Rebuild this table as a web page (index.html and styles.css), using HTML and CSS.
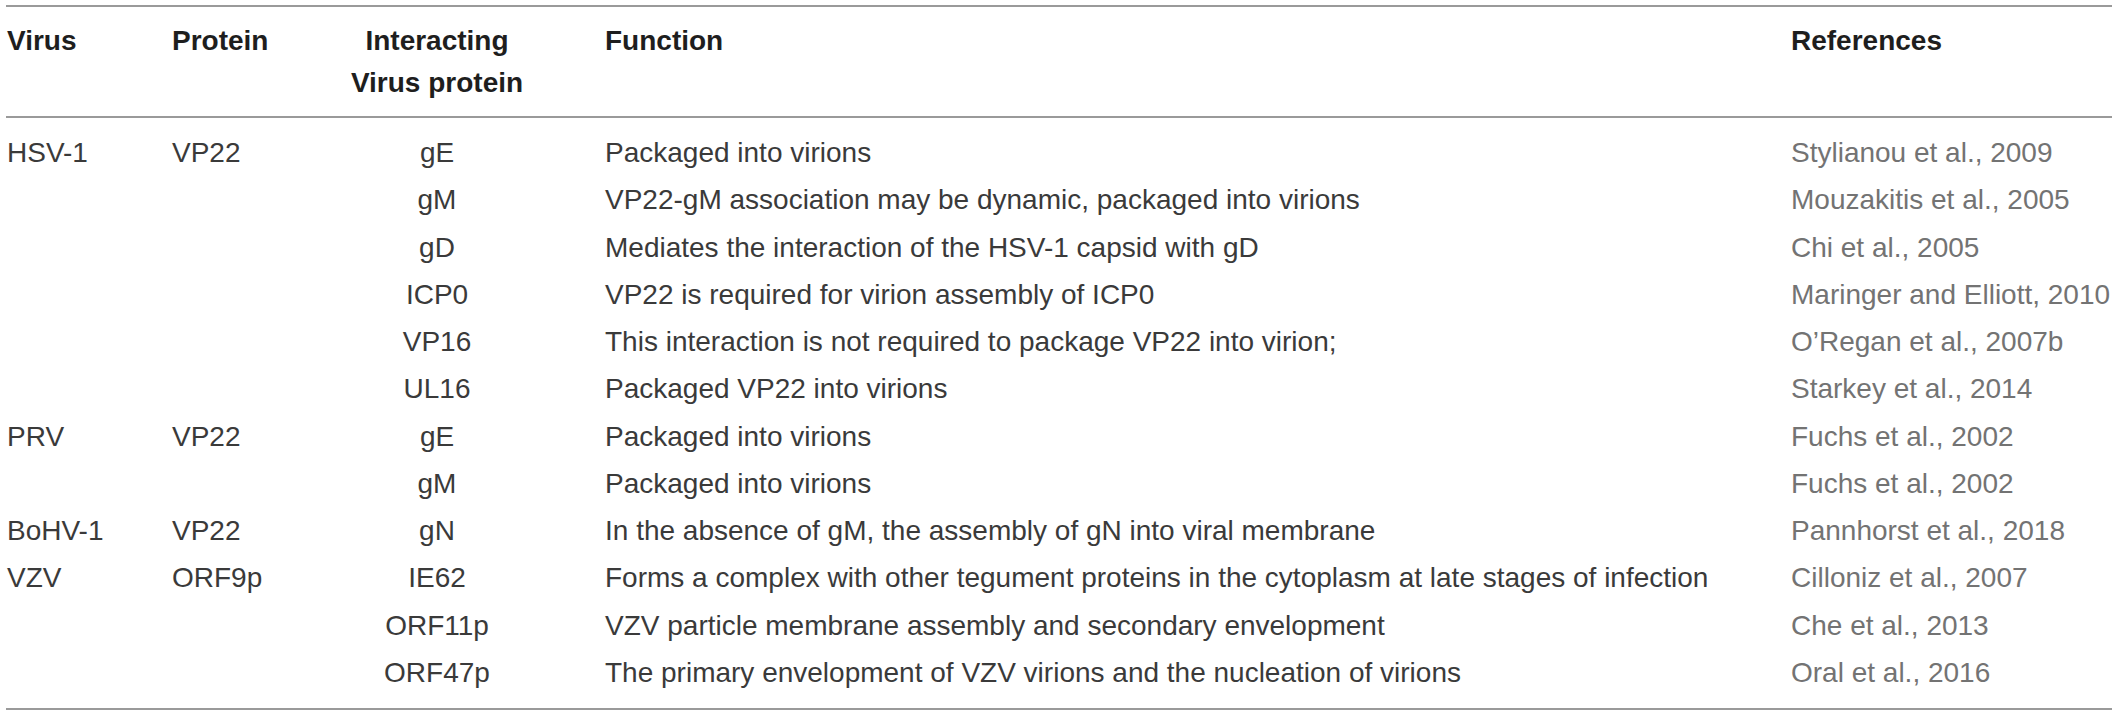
FILE: index.html
```html
<!DOCTYPE html>
<html>
<head>
<meta charset="utf-8">
<link rel="stylesheet" href="styles.css">
</head>
<body>
<table class="tbl">
  <colgroup>
    <col class="c1"><col class="c2"><col class="c3"><col class="c4"><col class="c5">
  </colgroup>
  <thead>
    <tr>
      <th class="virus">Virus</th>
      <th>Protein</th>
      <th class="mid">Interacting<br>Virus protein</th>
      <th class="fn">Function</th>
      <th>References</th>
    </tr>
  </thead>
  <tbody>
    <tr><td class="virus">HSV-1</td><td>VP22</td><td class="mid">gE</td><td class="fn">Packaged into virions</td><td class="ref">Stylianou et al., 2009</td></tr>
    <tr><td class="virus"></td><td></td><td class="mid">gM</td><td class="fn">VP22-gM association may be dynamic, packaged into virions</td><td class="ref">Mouzakitis et al., 2005</td></tr>
    <tr><td class="virus"></td><td></td><td class="mid">gD</td><td class="fn">Mediates the interaction of the HSV-1 capsid with gD</td><td class="ref">Chi et al., 2005</td></tr>
    <tr><td class="virus"></td><td></td><td class="mid">ICP0</td><td class="fn">VP22 is required for virion assembly of ICP0</td><td class="ref">Maringer and Elliott, 2010</td></tr>
    <tr><td class="virus"></td><td></td><td class="mid">VP16</td><td class="fn">This interaction is not required to package VP22 into virion;</td><td class="ref">O’Regan et al., 2007b</td></tr>
    <tr><td class="virus"></td><td></td><td class="mid">UL16</td><td class="fn">Packaged VP22 into virions</td><td class="ref">Starkey et al., 2014</td></tr>
    <tr><td class="virus">PRV</td><td>VP22</td><td class="mid">gE</td><td class="fn">Packaged into virions</td><td class="ref">Fuchs et al., 2002</td></tr>
    <tr><td class="virus"></td><td></td><td class="mid">gM</td><td class="fn">Packaged into virions</td><td class="ref">Fuchs et al., 2002</td></tr>
    <tr><td class="virus">BoHV-1</td><td>VP22</td><td class="mid">gN</td><td class="fn">In the absence of gM, the assembly of gN into viral membrane</td><td class="ref">Pannhorst et al., 2018</td></tr>
    <tr><td class="virus">VZV</td><td>ORF9p</td><td class="mid">IE62</td><td class="fn">Forms a complex with other tegument proteins in the cytoplasm at late stages of infection</td><td class="ref">Cilloniz et al., 2007</td></tr>
    <tr><td class="virus"></td><td></td><td class="mid">ORF11p</td><td class="fn">VZV particle membrane assembly and secondary envelopment</td><td class="ref">Che et al., 2013</td></tr>
    <tr><td class="virus"></td><td></td><td class="mid">ORF47p</td><td class="fn">The primary envelopment of VZV virions and the nucleation of virions</td><td class="ref">Oral et al., 2016</td></tr>
  </tbody>
</table>
</body>
</html>
```
FILE: styles.css
```css
html, body {
  margin: 0;
  padding: 0;
  background: #ffffff;
}

.tbl {
  margin: 5px 6px 0 6px;
  width: 2106px;
  table-layout: fixed;
  border-collapse: collapse;
  font-family: "Liberation Sans", Arial, sans-serif;
  font-size: 28px;
  color: #3a3a3a;
  border-top: 2px solid #9a9a9a;
  border-bottom: 2px solid #9a9a9a;
}

.c1 { width: 166px; }
.c2 { width: 118px; }
.c3 { width: 294px; }
.c4 { width: 1207px; }
.c5 { width: 321px; }

.tbl th,
.tbl td {
  padding: 0;
  white-space: nowrap;
  text-align: left;
  vertical-align: top;
}

.tbl thead th {
  font-weight: bold;
  color: #1e1e1e;
  line-height: 42px;
  padding-top: 13px;
  padding-bottom: 12px;
  border-bottom: 2px solid #9a9a9a;
}

.tbl td {
  line-height: 47.25px;
}

.tbl tbody tr:first-child td {
  padding-top: 11px;
}

.tbl tbody tr:last-child td {
  padding-bottom: 12px;
}

.tbl .virus {
  padding-left: 1px;
}

.tbl .mid {
  text-align: center;
}

.tbl .fn {
  padding-left: 21px;
}

.tbl .ref {
  color: #737373;
}
```
